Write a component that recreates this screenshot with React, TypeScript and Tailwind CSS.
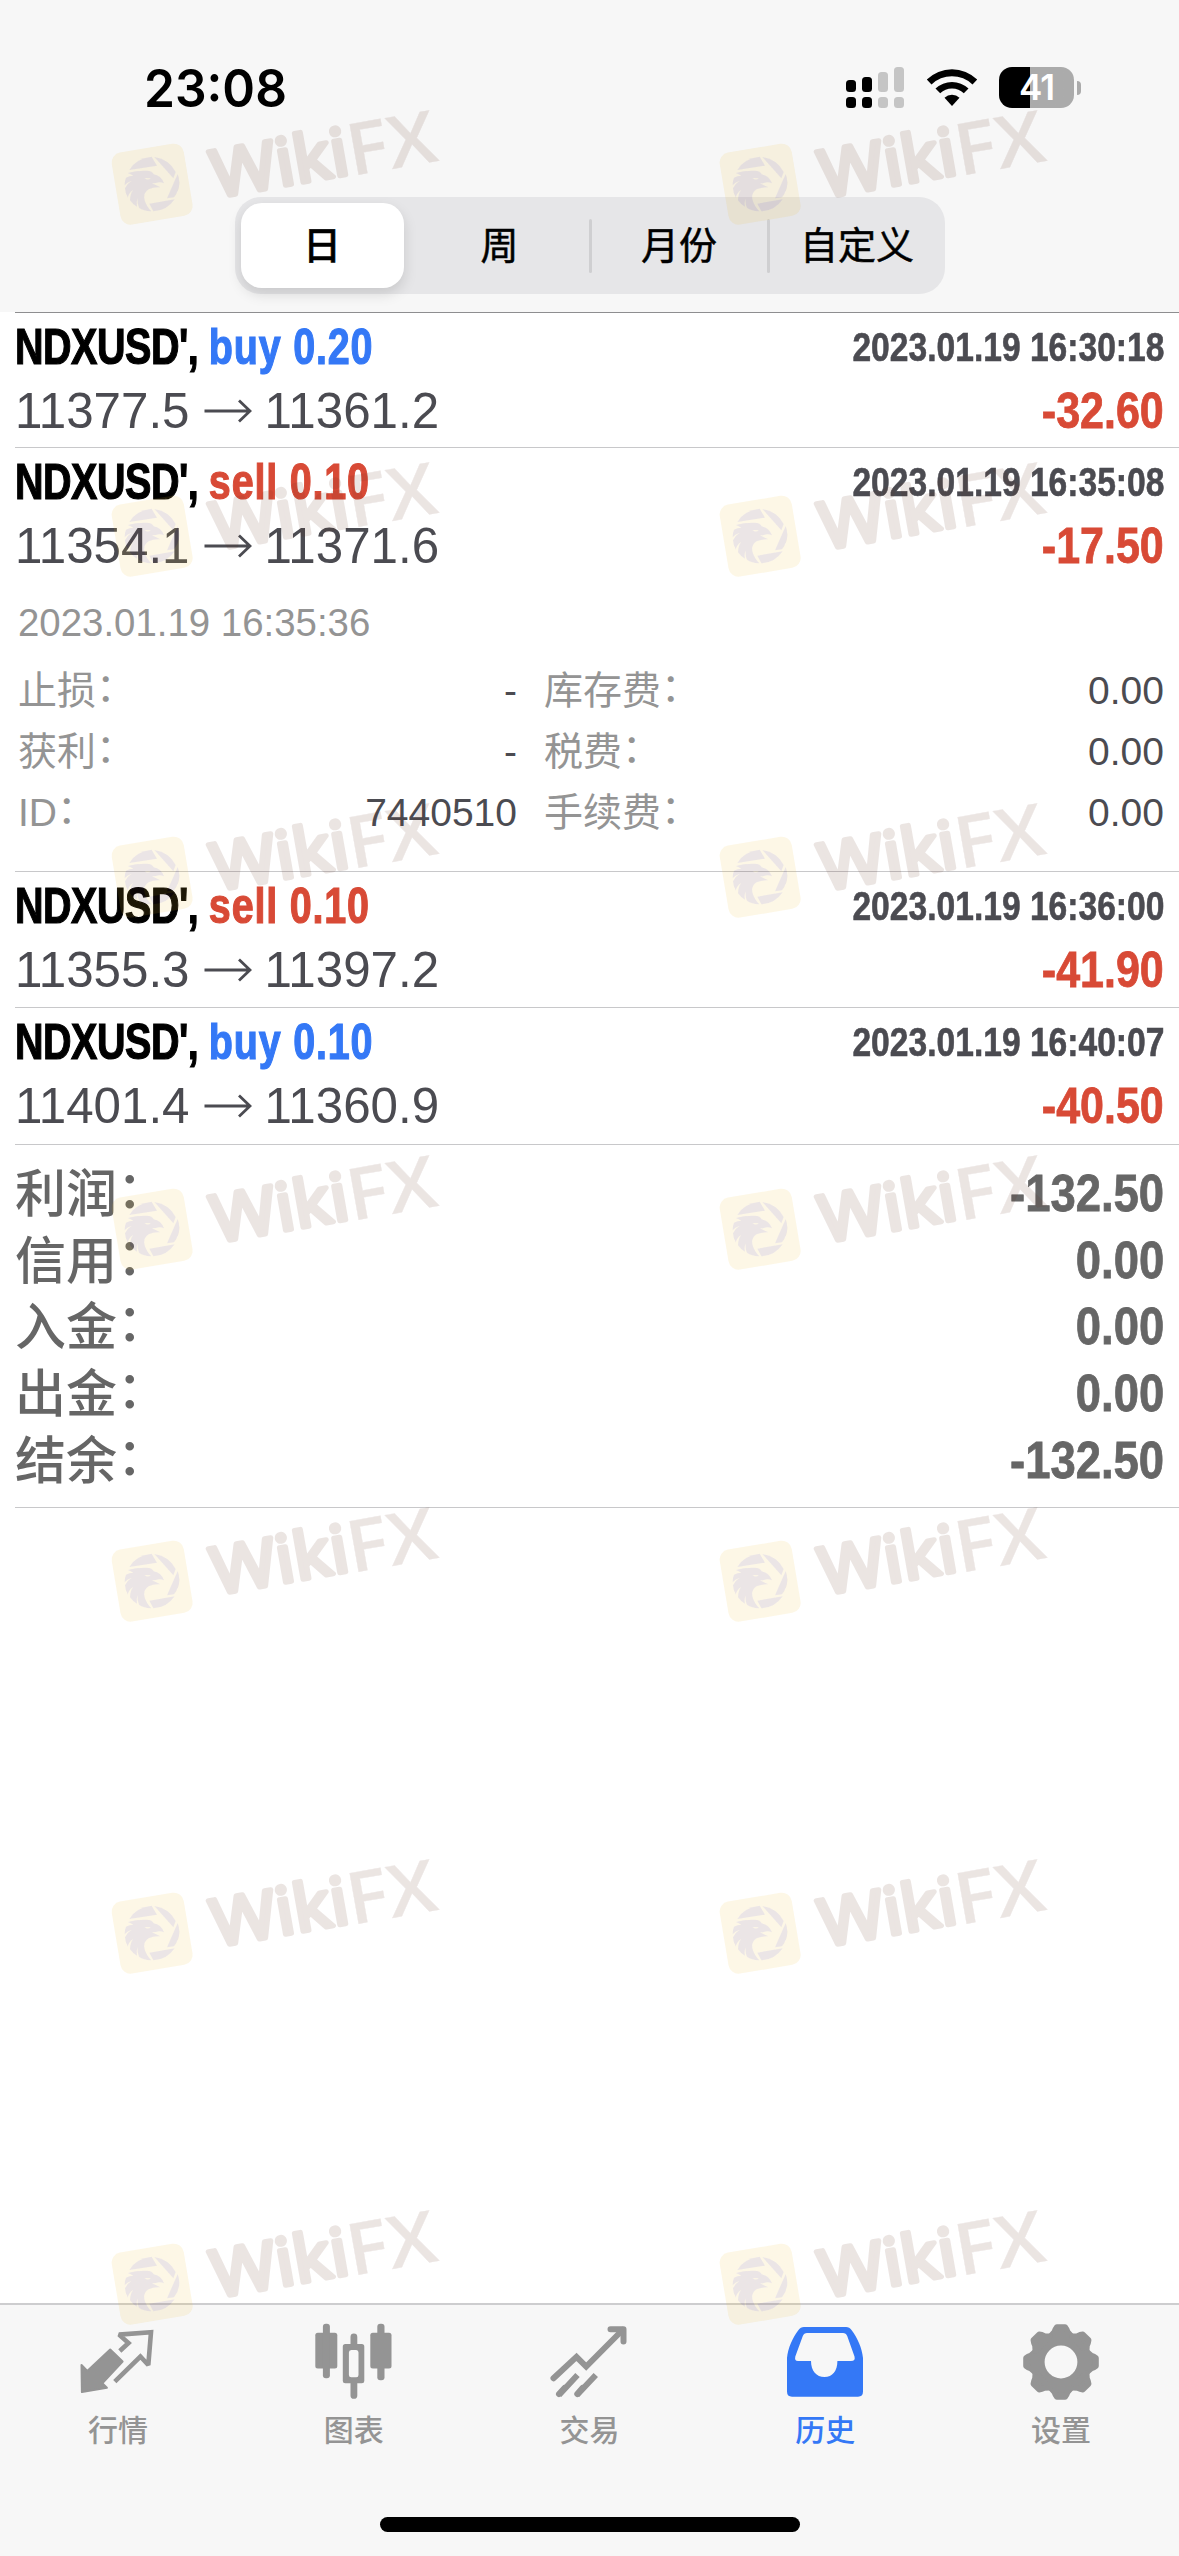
import { clsx } from "clsx";

type Deal = {
  side: "buy" | "sell";
  volume: string;
  open: string;
  close: string;
  time: string;
  profit: string;
  height: string;
  line: string;
  expanded?: boolean;
};

const deals: Deal[] = [
  { side: "buy", volume: "0.20", open: "11377.5", close: "11361.2", time: "2023.01.19 16:30:18", profit: "-32.60", height: "h-[135px]", line: "border-[#8e8e90]" },
  { side: "sell", volume: "0.10", open: "11354.1", close: "11371.6", time: "2023.01.19 16:35:08", profit: "-17.50", height: "h-[424px]", line: "border-[#c8c8ca]", expanded: true },
  { side: "sell", volume: "0.10", open: "11355.3", close: "11397.2", time: "2023.01.19 16:36:00", profit: "-41.90", height: "h-[136px]", line: "border-[#c8c8ca]" },
  { side: "buy", volume: "0.10", open: "11401.4", close: "11360.9", time: "2023.01.19 16:40:07", profit: "-40.50", height: "h-[137px]", line: "border-[#c8c8ca]" },
];

const details = [
  ["止损", "-", "库存费", "0.00"],
  ["获利", "-", "税费", "0.00"],
  ["ID", "7440510", "手续费", "0.00"],
];

const summary = [
  ["利润", "-132.50"],
  ["信用", "0.00"],
  ["入金", "0.00"],
  ["出金", "0.00"],
  ["结余", "-132.50"],
];

const periods = ["日", "周", "月份", "自定义"];

const watermarkPlaces = [
  "left-[90px] top-[61px]",
  "left-[698px] top-[61px]",
  "left-[90px] top-[413px]",
  "left-[698px] top-[413px]",
  "left-[90px] top-[754px]",
  "left-[698px] top-[754px]",
  "left-[90px] top-[1106px]",
  "left-[698px] top-[1106px]",
  "left-[90px] top-[1458px]",
  "left-[698px] top-[1458px]",
  "left-[90px] top-[1810px]",
  "left-[698px] top-[1810px]",
  "left-[90px] top-[2161px]",
  "left-[698px] top-[2161px]",
];

const StatusBar = () => (
  <div className="flex h-[197px] items-start justify-between pl-[144px] pr-[98px] pt-[62px]">
    <div className="origin-left scale-x-[0.955] font-['Inter'] text-[52px] font-semibold leading-[54px] text-black">
      23:08
    </div>
    <div className="flex items-center pt-[5px]">
      <svg width="58" height="41" viewBox="0 0 58 41">
        <rect x="0" y="13" width="10" height="12" rx="3.5" />
        <rect x="16" y="10" width="10" height="15" rx="3.5" />
        <g fill="#c5c5c5">
          <rect x="32" y="5" width="10" height="20" rx="3.5" />
          <rect x="48" y="0" width="10" height="25" rx="3.5" />
          <rect x="32" y="30" width="10" height="11" rx="3.5" />
          <rect x="48" y="30" width="10" height="11" rx="3.5" />
        </g>
        <rect x="0" y="30" width="10" height="11" rx="3.5" />
        <rect x="16" y="30" width="10" height="11" rx="3.5" />
      </svg>
      <svg className="ml-[22px]" width="52" height="41" viewBox="0 0 52 41">
        <path d="M0.8 12.5 A36 36 0 0 1 51.2 12.5 L46.5 17.5 A29.5 29.5 0 0 0 5.5 17.5 Z" />
        <path d="M9.5 21.5 A24 24 0 0 1 42.5 21.5 L37.8 26.3 A17 17 0 0 0 14.2 26.3 Z" />
        <path d="M18.5 30.8 A11 11 0 0 1 33.5 30.8 L26 39 Z" />
      </svg>
      <div className="ml-[21px] flex h-[41px] w-[75px] items-center justify-center rounded-[13px] bg-linear-to-r from-black from-[41%] to-[#ababab] to-[41%] font-['Inter'] text-[35px] font-semibold leading-none tracking-[-1px] text-white">
        41
      </div>
      <div className="ml-[3px] h-[14px] w-[4px] rounded-r-full bg-[#ababab]" />
    </div>
  </div>
);

const PeriodSwitch = () => (
  <div className="mx-auto flex h-[97px] w-[710px] rounded-[26px] bg-[#e6e6e8] pl-[6px]">
    {periods.map((period, i) => (
      <div
        key={period}
        className={clsx(
          "flex items-center text-[38px] leading-none text-black",
          i === 0
            ? "my-[6px] w-[163px] justify-center rounded-[21px] bg-white pt-px font-medium shadow-[0_6px_14px_rgba(0,0,0,0.13)] [-webkit-text-stroke:0.5px_black]"
            : "pt-px [-webkit-text-stroke:0.5px_black]",
          i === 1 && "ml-[7px] w-[178px]",
          i > 1 && "w-[178px]"
        )}
      >
        {i > 1 && <span className="h-[54px] w-[3px] rounded-full bg-[#cfcfd1]" />}
        <span className="flex-1 text-center">{period}</span>
      </div>
    ))}
  </div>
);

const Label = ({ name }: { name: string }) => (
  <span>
    {name}
    <span className="inline-block -translate-y-[0.07em]">：</span>
  </span>
);

const Arrow = () => (
  <svg className="ml-[14px] mr-[13px]" width="48" height="26" viewBox="0 0 48 26" fill="none" stroke="#4b4b51" strokeWidth="2.8">
    <path d="M0.5 13 H46 M35 2.5 L46 13 L35 23.5" />
  </svg>
);

const DealDetails = () => (
  <div className="mt-[13px] pl-[3px] text-[39px] text-[#949494]">
    <div className="h-[64px] text-[38.4px] leading-[64px]">2023.01.19 16:35:36</div>
    <div className="mt-[5px]">
      {details.map(([leftName, leftValue, rightName, rightValue]) => (
        <div key={leftName} className="flex h-[61px] leading-[61px]">
          <div className="flex w-[499px] justify-between">
            <Label name={leftName} />
            <span className="text-[#4b4b51]">{leftValue}</span>
          </div>
          <div className="ml-[27px] flex flex-1 justify-between">
            <Label name={rightName} />
            <span className="text-[#4b4b51]">{rightValue}</span>
          </div>
        </div>
      ))}
    </div>
  </div>
);

const DealRow = ({ deal }: { deal: Deal }) => (
  <div className={clsx("ml-[15px] border-t pr-[15px] pt-[2px]", deal.height, deal.line)}>
    <div className="flex h-[64px] items-center justify-between whitespace-nowrap font-bold">
      <div className="flex origin-left scale-x-[0.79] text-[50px]">
        <span className="tracking-[-0.6px] text-black [-webkit-text-stroke:1.2px_black]">NDXUSD',&nbsp;</span>
        <span
          className={clsx(
            "tracking-[1px]",
            deal.side === "buy"
              ? "text-[#3478f6] [-webkit-text-stroke:1.2px_#3478f6]"
              : "text-[#d84a36] [-webkit-text-stroke:1.2px_#d84a36]"
          )}
        >
          {deal.side} {deal.volume}
        </span>
      </div>
      <span className="origin-right scale-x-[0.84] text-[40px] text-[#4b4b51] [-webkit-text-stroke:0.6px_#4b4b51]">
        {deal.time}
      </span>
    </div>
    <div className="flex h-[64px] items-center justify-between whitespace-nowrap">
      <div className="flex items-center text-[49.3px] text-[#4b4b51]">
        {deal.open}
        <Arrow />
        {deal.close}
      </div>
      <span className="origin-right scale-x-[0.86] text-[50px] font-bold text-[#d84a36] [-webkit-text-stroke:0.8px_#d84a36]">
        {deal.profit}
      </span>
    </div>
    {deal.expanded && <DealDetails />}
  </div>
);

const Summary = () => (
  <div className="ml-[15px] h-[364px] border-y border-[#c8c8ca] pr-[15px] pt-[15px]">
    {summary.map(([name, value]) => (
      <div key={name} className="flex h-[66.7px] items-center justify-between text-[#666666]">
        <span className="pt-[4px] text-[51px] font-medium">
          <Label name={name} />
        </span>
        <span className="origin-right scale-x-[0.865] text-[52.5px] font-bold [-webkit-text-stroke:0.8px_#666666]">
          {value}
        </span>
      </div>
    ))}
  </div>
);

const QuotesIcon = () => (
  <svg width="80" height="80" viewBox="78 32 80 80" fill="none">
    <path fill="#949494" stroke="#949494" strokeWidth="2" strokeLinejoin="round" d="M81.5 75 L87.3 81 L110.2 59.5 L122.6 71.5 L102.3 93.3 L106.9 97.8 L81.9 102 Z" />
    <path stroke="#949494" strokeWidth="4.6" strokeMiterlimit="2" d="M119.8 61 L128.5 53 L119 44.6 L151 42.2 L148.3 75 L140.4 66.5 L114.8 91.7" />
  </svg>
);

const ChartIcon = () => (
  <svg width="80" height="80" viewBox="313.7 32 80 80" fill="#949494">
    <rect x="315" y="42.7" width="22" height="35.7" rx="2.5" />
    <rect x="322.6" y="33.7" width="7" height="54.6" rx="3" />
    <path fillRule="evenodd" d="M345 54 H361.5 Q364 54 364 56.5 V91 Q364 93.3 361.5 93.3 H345 Q342.5 93.3 342.5 91 V56.5 Q342.5 54 345 54 Z M351 60 Q348.6 60 348.6 62.5 V85 Q348.6 87.3 351 87.3 H356 Q358.2 87.3 358.2 85 V62.5 Q358.2 60 356 60 Z" />
    <path d="M350.2 55 V47 A3.4 3.4 0 0 1 357 47 V55 Z M350.2 93 V105.4 A3.4 3.4 0 0 0 357 105.4 V93 Z" />
    <rect x="370" y="42.7" width="21.2" height="35.7" rx="2.5" />
    <rect x="377" y="33.7" width="7.2" height="56.5" rx="3" />
  </svg>
);

const TradeIcon = () => (
  <svg width="80" height="80" viewBox="549.5 32 80 80" fill="none" stroke="#949494" strokeWidth="6">
    <path strokeLinecap="round" d="M554 88.3 L577 66.8 L586.7 76.5 L623 40" />
    <path strokeLinecap="round" strokeLinejoin="round" d="M611 39.2 H624 V51.5" />
    <path d="M559.5 105 L578 85 M577.5 105 L596.3 85" />
    <path strokeLinecap="round" d="M559.5 104 L565 98 M577.8 104 L583 98" />
  </svg>
);

const HistoryIcon = () => (
  <svg width="80" height="80" viewBox="785 32 80 80" fill="#3478f6">
    <path fillRule="evenodd" d="M804 37 H846 Q849.5 37 851.5 40 C857.5 48 862 58 863 68 V101.5 Q863 106.7 858 106.7 H792 Q787 106.7 787 101.5 V68 C788 58 792.5 48 798.5 40 Q800.5 37 804 37 Z M807 43 Q804 43 802.8 46 L795.3 66.5 Q794.3 71 798 71 H811 C811 81 816.5 87 824.5 87 C832.5 87 837.4 81 837.4 71 H851 Q855.7 71 854.5 66.5 L847.2 46 Q846 43 843 43 Z" />
  </svg>
);

const SettingsIcon = () => (
  <svg width="80" height="80" viewBox="-40 -40 80 80" fill="#949494" stroke="#949494">
    <circle r="23.2" fill="none" strokeWidth="13.6" />
    {[0, 45, 90, 135, 180, 225, 270, 315].map((angle) => (
      <path
        key={angle}
        transform={`rotate(${angle})`}
        strokeWidth="6"
        strokeLinejoin="round"
        d="M-4 -34.8 H4 Q5.5 -33 6.5 -30 L10 -26 H-10 L-6.5 -30 Q-5.5 -33 -4 -34.8 Z"
      />
    ))}
  </svg>
);

const tabs = [
  { name: "行情", icon: <QuotesIcon /> },
  { name: "图表", icon: <ChartIcon /> },
  { name: "交易", icon: <TradeIcon /> },
  { name: "历史", icon: <HistoryIcon />, active: true },
  { name: "设置", icon: <SettingsIcon /> },
];

const Watermark = ({ id, place }: { id: string; place: string }) => (
  <svg className={clsx("absolute", place)} width="380" height="190" viewBox="0 -90 1140 570">
    <defs>
      <g id={`${id}-logo`}>
        {/* shutter blades */}
        <path d="M118 237 Q136 203 185 197 L201 224 Z" />
        <path d="M193 198 Q238 205 257 243 L250 262 Z" />
        <path d="M263 249 Q277 287 252 319 L231 322 Z" />
        <path d="M178 338 L254 325 Q230 360 190 361 Z" />
        {/* eagle head */}
        <path d="M113 246 Q140 238 170 239 Q188 240 191 250 Q213 253 222 277 Q210 271 198 276 L186 277 Q196 282 211 289 Q190 288 176 295 Q158 306 164 328 Q169 346 184 361 Q160 360 147 350 Q141 338 143 322 Q138 334 141 347 Q128 340 120 328 Q120 308 130 296 Q114 308 114 320 Q105 306 105 292 Q111 278 124 270 Q111 274 104 283 Q104 268 108 260 Q118 254 130 254 Q120 248 113 246 Z M164 261 Q173 270 182 262 Z" fillRule="evenodd" />
      </g>
      <mask id={`${id}-cut`}>
        <rect width="1140" height="480" fill="white" />
        <use href={`#${id}-logo`} fill="black" />
      </mask>
    </defs>
    <g mask={`url(#${id}-cut)`}>
      <rect x="77" y="170" width="219" height="219" rx="30" transform="rotate(-9.5 187 280)" fill="rgba(238,188,47,0.12)" />
    </g>
    <use href={`#${id}-logo`} fill="#6a3a3e" opacity="0.125" />
    <g transform="translate(377 327) rotate(-10)" fill="#612f1e" stroke="#612f1e" strokeLinejoin="round" opacity="0.12">
      <text x="1" y="-7" textLength="414" lengthAdjust="spacingAndGlyphs" strokeWidth="15" className="font-['Open_Sans'] text-[196px] font-normal">
        Wiki
      </text>
      <text x="414" y="0" textLength="268" lengthAdjust="spacingAndGlyphs" strokeWidth="1" className="font-['Open_Sans'] text-[216px] font-semibold">
        FX
      </text>
    </g>
  </svg>
);

const App = () => {
  return (
    <div className="relative flex h-[2556px] w-[1179px] flex-col overflow-hidden bg-white font-['Liberation_Sans','Noto_Sans_CJK_SC',sans-serif]">
      <header className="h-[312px] bg-[#f7f7f7]">
        <StatusBar />
        <PeriodSwitch />
      </header>

      <main className="flex-1">
        {deals.map((deal) => (
          <DealRow key={deal.time} deal={deal} />
        ))}
        <Summary />
      </main>

      <nav className="flex h-[253px] flex-col border-t-2 border-[#cdcdcf] bg-[#f7f7f7]">
        <div className="flex pt-[17px]">
          {tabs.map((tab) => (
            <div
              key={tab.name}
              className={clsx("flex flex-1 flex-col items-center", tab.active ? "text-[#3478f6]" : "text-[#949494]")}
            >
              {tab.icon}
              <span className="mt-[9px] text-[30px] font-medium leading-[40px]">{tab.name}</span>
            </div>
          ))}
        </div>
        <div className="mx-auto mb-[24px] mt-auto h-[15px] w-[420px] rounded-full bg-black" />
      </nav>

      {watermarkPlaces.map((place, i) => (
        <Watermark key={place} id={`wm${i}`} place={place} />
      ))}
    </div>
  );
};

export default App;
